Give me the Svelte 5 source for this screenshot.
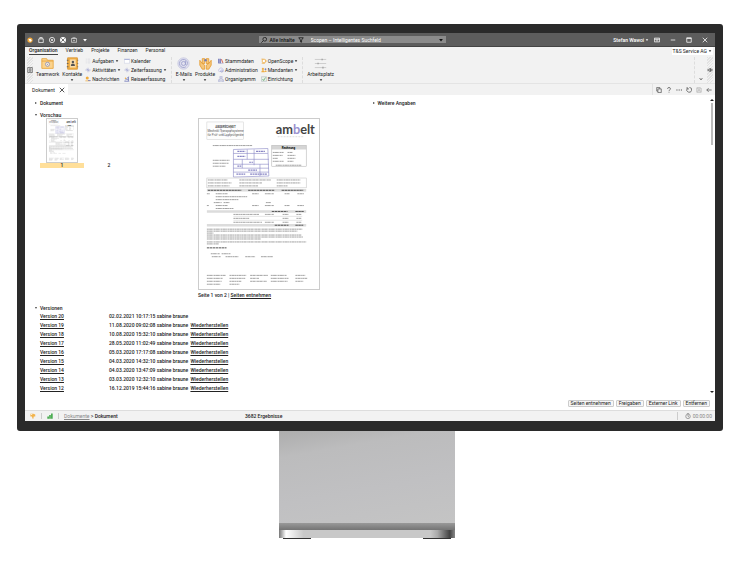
<script lang="ts">
  interface Entry {
    icon: string;
    label: string;
    menu?: boolean;
  }

  const icons: Record<string, string> = {
    logo: '<circle cx="8" cy="8" r="7" fill="#f2a93b"/><path d="M4 5h6l3 4-5 4z" fill="#fff"/>',
    bag: '<path d="M2 5h12v10H2zM5 5V1h6v4" fill="none" stroke="#fff" stroke-width="2"/>',
    play: '<circle cx="8" cy="8" r="7" fill="none" stroke="#fff" stroke-width="2"/><circle cx="8" cy="8" r="2.5" fill="#fff"/>',
    ring: '<circle cx="8" cy="8" r="5.5" fill="none" stroke="#fff" stroke-width="5"/><path d="M3 3l3 3M13 3l-3 3M3 13l3-3M13 13l-3-3" stroke="#666" stroke-width="2"/>',
    camera: '<path d="M1 4h14v10H1zM4 2h8" fill="none" stroke="#ddd" stroke-width="2"/><circle cx="8" cy="9" r="2" fill="#ddd"/>',
    down: '<path d="M3 5h10l-5 7z" fill="currentColor"/>',
    search: '<circle cx="10" cy="6" r="5" fill="none" stroke="currentColor" stroke-width="2"/><path d="M6 10l-5 5" stroke="currentColor" stroke-width="2"/>',
    filter: '<path d="M2 2h12L9.5 8v6l-3-1V8z" fill="none" stroke="currentColor" stroke-width="2"/>',
    ribbon: '<path d="M1 3h14v10H1zM1 6h14M8 12V8M6 9l2-2 2 2" fill="none" stroke="currentColor" stroke-width="2"/>',
    min: '<path d="M2 8h12" stroke="currentColor" stroke-width="2"/>',
    max: '<path d="M2 2h12v12H2zM2 4h12" fill="none" stroke="currentColor" stroke-width="2"/>',
    close: '<path d="M2 2l12 12M14 2L2 14" stroke="currentColor" stroke-width="2"/>',
    folder: '<path d="M1 2h6l1 2h7v10H1z" fill="#fbd38d" stroke="#e8a23a" stroke-width="1"/><path d="M1 5h14" stroke="#e8a23a"/><circle cx="8" cy="9" r="2.5" fill="#fdf0da" stroke="#8a8fb8"/><circle cx="8" cy="9" r="0.8" fill="#8a8fb8"/>',
    contacts: '<path d="M2 1h12v14H2z" fill="#f0b04a" stroke="#d9932b"/><path d="M5 3h7v10H5z" fill="#fbdda8"/><circle cx="8.5" cy="6" r="1.5" fill="#555"/><path d="M6 11c0-4 5-4 5 0z" fill="#555"/><path d="M1 4h2M1 8h2M1 12h2M14 4h1M14 8h1M14 12h1" stroke="#555"/>',
    tasks: '<path d="M2 3h3M2 8h3M2 13h3M7 3h7M7 8h7M7 13h7" stroke="#d3d4de" stroke-width="1.5"/>',
    activity: '<path d="M1 8h14M8 2v12M4 5l8 6" stroke="#9a9fd0" stroke-width="1.5"/>',
    message: '<circle cx="6" cy="5" r="4" fill="#f0ac3c"/><path d="M1 12h10l4 2H1z" fill="#f0ac3c"/><path d="M8 12h7" stroke="#6e76ba" stroke-width="2"/>',
    calendar: '<path d="M1 2h14v12H1z" fill="#fff" stroke="#b3b8d6"/><path d="M1 4h14" stroke="#98a0d0" stroke-width="2"/>',
    trip: '<path d="M1 14h13M3 12L12 2v11M7 9l6 2" fill="none" stroke="#7078b8" stroke-width="2"/><circle cx="4" cy="6" r="2" fill="#f0ac3c"/>',
    at: '<circle cx="8" cy="8" r="7" fill="#e0e0ee" stroke="#c6c8e0"/><circle cx="8" cy="8" r="2.5" fill="none" stroke="#9b9fcd"/><path d="M10.5 5v4c0 2 2.500 1 2.500-1a5 5 0 1 0-2 4" fill="none" stroke="#9b9fcd"/>',
    hands: '<path d="M1 4l3 4 3 2v5H4l-3-5zM15 4l-3 4-3 2v5h3l3-5z" fill="#f5c67c" stroke="#e59b2e"/><path d="M4 2h3v6H4zM9 2h3v6H9z" fill="#f5c67c" stroke="#e59b2e"/><circle cx="8" cy="4" r="1.5" fill="#777cab"/>',
    books: '<path d="M2 2v12M6 2v12" stroke="#686fb5" stroke-width="3"/><path d="M9 3l4 10" stroke="#d87565" stroke-width="3"/><path d="M1 14h14" stroke="#686fb5"/>',
    cloud: '<path d="M4 12a3 3 0 0 1 0-6 4 4 0 0 1 8 0 3 3 0 0 1 0 6z" fill="#eeeefa" stroke="#9da2d0"/><circle cx="10" cy="11" r="3" fill="none" stroke="#7379ba"/>',
    org: '<path d="M5 1h6v4H5zM1 11h5v4H1zM10 11h5v4h-5zM8 5v3M3 11V8h10v3" fill="none" stroke="#a0a5cf" stroke-width="1.5"/>',
    scope: '<circle cx="8" cy="8" r="5" fill="#fff" stroke="#eda83c" stroke-width="2"/><path d="M1 3h5M10 8h5M2 14h8" stroke="#eda83c" stroke-width="2"/>',
    clients: '<circle cx="5" cy="5" r="3" fill="#efae46"/><circle cx="12" cy="6" r="2.5" fill="#7e83b6"/><path d="M1 14c0-7 8-7 9 0zM10 13c0-5 5-5 5 0z" fill="#efae46"/>',
    setup: '<path d="M1 2h14v12H1z" fill="#eaf2ea" stroke="#8b97a5"/><path d="M4 8l3 4 5-8" fill="none" stroke="#5da269" stroke-width="2"/>',
    sliders: '<path d="M1 3h14M1 8h14M1 13h14" stroke="#c5c5c5"/><path d="M10 2v2M5 7v2M11 12v2" stroke="#9c9c9c" stroke-width="1.5"/>',
    copy: '<path d="M5 5h9v10H5zM5 11H2V1h8v4" fill="none" stroke="currentColor" stroke-width="2"/>',
    help: '<path d="M4 5c0-5 8-5 8 0 0 3-4 2-4 6M8 13v2" fill="none" stroke="currentColor" stroke-width="2"/>',
    more: '<path d="M1 8h3M7 8h3M13 8h3" stroke="currentColor" stroke-width="3"/>',
    reload: '<path d="M3 4a6.5 6.5 0 1 0 6-3M3 0v5h5" fill="none" stroke="currentColor" stroke-width="2"/>',
    save: '<path d="M2 2h10l2 2v10H2zM5 2v4h6V2M5 14V9h6v5" fill="none" stroke="#aaa" stroke-width="1.5"/>',
    back: '<path d="M15 8H2M7 3L2 8l5 5" fill="none" stroke="currentColor" stroke-width="2"/>',
    chevron: '<path d="M3 5l5 6 5-6" fill="none" stroke="currentColor" stroke-width="3"/>',
    pin: '<path d="M0 8h5M5 5v6h5V5zM10 8h6M10 3v10" fill="none" stroke="currentColor" stroke-width="2"/>',
    list: '<path d="M2 1h12v14H2zM5 5h6M5 8h6M5 11h6" fill="none" stroke="currentColor" stroke-width="2"/>',
    thumb: '<path d="M1 2h8l5 2v5h-4l-1 6H7L5 9H1z" fill="#f2b44d"/><path d="M2 4h4" stroke="#fff" stroke-width="2"/>',
    signal: '<path d="M3 15V9M8 15V5M13 15V1" stroke="#36a33d" stroke-width="4"/>',
    clock: '<circle cx="8" cy="9" r="6" fill="none" stroke="currentColor" stroke-width="2"/><path d="M8 5v4l3 2M5 1h6" fill="none" stroke="currentColor" stroke-width="2"/>',
  };

  const quickIcons = ['logo', 'bag', 'play', 'ring', 'camera', 'down'];
  const menuTabs = ['Organisation', 'Vertrieb', 'Projekte', 'Finanzen', 'Personal'];

  const taskEntries: Entry[] = [
    { icon: 'tasks', label: 'Aufgaben', menu: true },
    { icon: 'activity', label: 'Aktivitäten', menu: true },
    { icon: 'message', label: 'Nachrichten' },
  ];
  const timeEntries: Entry[] = [
    { icon: 'calendar', label: 'Kalender' },
    { icon: 'activity', label: 'Zeiterfassung', menu: true },
    { icon: 'trip', label: 'Reiseerfassung' },
  ];
  const adminEntries: Entry[] = [
    { icon: 'books', label: 'Stammdaten' },
    { icon: 'cloud', label: 'Administration' },
    { icon: 'org', label: 'Organigramm' },
  ];
  const scopeEntries: Entry[] = [
    { icon: 'scope', label: 'OpenScope', menu: true },
    { icon: 'clients', label: 'Mandanten', menu: true },
    { icon: 'setup', label: 'Einrichtung' },
  ];

  const versions = [
    { nr: 20, date: '02.02.2021 10:17:15' },
    { nr: 19, date: '11.08.2020 09:02:08' },
    { nr: 18, date: '10.08.2020 15:32:10' },
    { nr: 17, date: '28.05.2020 11:02:49' },
    { nr: 16, date: '05.03.2020 17:17:08' },
    { nr: 15, date: '04.03.2020 14:32:10' },
    { nr: 14, date: '04.03.2020 13:47:09' },
    { nr: 13, date: '03.03.2020 12:32:10' },
    { nr: 12, date: '16.12.2019 15:44:16' },
  ];

  const actions = ['Seiten entnehmen', 'Freigaben', 'Externer Link', 'Entfernen'];

  // text lines of the scanned invoice: x, y, length
  const scanLines = [
    [14, 27, 40], [14, 42, 17], [14, 45, 16], [14, 48, 13],
    [75, 34, 11], [90, 34, 5], [75, 37, 10], [90, 37, 8], [75, 40, 5], [90, 40, 8],
    [75, 43, 11], [90, 43, 6], [78, 47, 26],
    [9, 62, 20], [41, 62, 32], [79, 62, 24],
    [9, 65, 24], [41, 65, 23], [79, 65, 24],
    [9, 68, 22], [41, 68, 19], [79, 68, 11],
    [8, 76, 3], [17, 76, 12], [54, 76, 7], [67, 76, 9], [87, 76, 5], [100, 76, 7],
    [17, 79, 32], [17, 82, 23], [15, 85, 8], [25, 85, 6], [68, 85, 5],
    [8, 88, 2], [17, 88, 12], [54, 88, 7], [67, 88, 9], [87, 88, 5], [100, 88, 7],
    [17, 91, 18], [35, 97, 26], [67, 97, 9], [85, 97, 6], [99, 97, 5],
    [35, 101, 16], [85, 101, 6], [99, 101, 5],
    [35, 105, 29], [67, 105, 9], [85, 105, 6], [99, 105, 5],
    [8, 112, 97], [8, 114, 92], [8, 116, 7], [8, 118, 96], [8, 120, 98],
    [8, 122, 55], [8, 125, 101], [8, 127, 12],
    [12, 137, 9], [23, 137, 9], [13, 140, 9], [27, 140, 13], [47, 140, 10], [63, 140, 12],
    [8, 159, 19], [31, 159, 17], [52, 159, 18], [73, 159, 16], [98, 159, 10],
    [8, 162, 16], [31, 162, 16], [52, 162, 9], [73, 162, 18], [98, 162, 12],
    [8, 165, 15], [31, 165, 12], [52, 165, 17], [73, 165, 17], [98, 165, 8],
    [8, 168, 14], [31, 168, 10],
  ];

  let query = $state('');
  let activeTab = $state('Organisation');
</script>

{#snippet icon(name: string, size = 'sm')}
  <svg class="icon {size}" viewBox="0 0 16 16" aria-hidden="true">{@html icons[name]}</svg>
{/snippet}

{#snippet bigEntry(name: string, label: string, menu: boolean)}
  <button class="big-entry">
    {@render icon(name, 'lg')}
    <span>{label}</span>
    {#if menu}{@render icon('down', 'xs')}{/if}
  </button>
{/snippet}

{#snippet entryList(entries: Entry[])}
  <div class="entry-list">
    {#each entries as entry (entry.label)}
      <button class="entry">
        {@render icon(entry.icon)}
        {entry.label}
        {#if entry.menu}{@render icon('down', 'xs')}{/if}
      </button>
    {/each}
  </div>
{/snippet}

{#snippet scan()}
  <svg class="scan" viewBox="0 0 122 173" role="img" aria-label="Rechnung">
    <rect x="8" y="3" width="37" height="18" fill="#fdfdfd" stroke="#ccc" stroke-width="0.5" />
    <path d="M27 6l6 4-3 8-6-2-2-7z" fill="none" stroke="#b5b3df" stroke-width="0.5" />
    <g class="scan-stamp">
      <text class="strong" x="27" y="9" text-anchor="middle">ABGERECHNET</text>
      <text x="27" y="13" text-anchor="middle">Mechnikl Transportsysteme</text>
      <text x="27" y="17" text-anchor="middle">für Prüf- und Lastprüfgeräte</text>
    </g>
    <text class="scan-logo" x="78" y="15">am<tspan fill="#9b91cf">b</tspan>elt</text>
    <path d="M80 18h26" stroke="#bbb" stroke-width="0.5" stroke-dasharray="2 1" />
    <rect x="74" y="27" width="35" height="4" fill="#d5d5d5" />
    <rect x="74" y="27" width="35" height="21" fill="none" stroke="#aaa" stroke-width="0.5" />
    <text class="scan-title" x="91" y="30" text-anchor="middle">Rechnung</text>
    <g fill="none" stroke="#8784c4" stroke-width="0.6">
      <path d="M35 31l35-1 1 28-36 1z" />
      <path d="M35 35h35M35 41h36M35 46h36M35 50h36M35 54h36M49 31v10M56 31v16M44 41v9M62 46v12" />
      <path d="M39 33h8M58 33h9M39 38h8M51 44h4M39 48h4M50 52h9M38 56h9M52 56h17" stroke-width="1.2" stroke-dasharray="2 0.5" />
    </g>
    <rect x="8" y="60" width="101" height="10" fill="none" stroke="#bbb" stroke-width="0.5" />
    <path d="M8 72.5h101M8 94h101M8 108h101" stroke="#dcdcdc" stroke-width="2.5" />
    <path d="M9 72.5h34M50 72.5h27M84 72.5h22M74 94h16M98 94h9M77 108h14M98 108h8M8 131h20" stroke="#555" stroke-width="1" stroke-dasharray="2.5 0.5" />
    <path d="M35 99h70M35 103h70" stroke="#ccc" stroke-width="0.5" />
    <g stroke="#8a8a8a" stroke-width="0.8" stroke-dasharray="2 0.3 3 0.3 1 0.4">
      {#each scanLines as [x, y, length]}
        <path d="M{x} {y}h{length}" />
      {/each}
    </g>
  </svg>
{/snippet}

<main class="page">
  <div class="monitor">
    <header class="titlebar">
      <div class="quick">
        {#each quickIcons as name (name)}
          <button aria-label={name}>{@render icon(name)}</button>
        {/each}
      </div>
      <div class="search">
        <button class="scope">{@render icon('search')} Alle Inhalte {@render icon('filter')}</button>
        <input type="text" aria-label="Suche" placeholder="Scopen – Intelligentes Suchfeld" bind:value={query} />
        {@render icon('down')}
      </div>
      <div class="window-tools">
        <button class="user">Stefan Wawoi {@render icon('down', 'xs')}</button>
        <button aria-label="Menüband">{@render icon('ribbon')}</button>
        <button aria-label="Minimieren">{@render icon('min')}</button>
        <button aria-label="Maximieren">{@render icon('max')}</button>
        <button aria-label="Schließen">{@render icon('close')}</button>
      </div>
    </header>

    <nav class="menu">
      {#each menuTabs as tab (tab)}
        <button class="menu-tab" class:active={tab === activeTab} onclick={() => (activeTab = tab)}>{tab}</button>
      {/each}
      <button class="company">T&amp;S Service AG {@render icon('down', 'xs')}</button>
    </nav>

    <div class="ribbon">
      <div class="handle">{@render icon('list')}</div>
      {@render bigEntry('folder', 'Teamwork', false)}
      {@render bigEntry('contacts', 'Kontakte', true)}
      {@render entryList(taskEntries)}
      {@render entryList(timeEntries)}
      <div class="divider"></div>
      {@render bigEntry('at', 'E-Mails', true)}
      {@render bigEntry('hands', 'Produkte', true)}
      {@render entryList(adminEntries)}
      {@render entryList(scopeEntries)}
      <div class="divider"></div>
      {@render bigEntry('sliders', 'Arbeitsplatz', true)}
      <div class="ribbon-end">
        <button class="expand" aria-label="Mehr">{@render icon('chevron', 'xs')}</button>
        <div class="handle">{@render icon('pin')}</div>
      </div>
    </div>

    <div class="doc-bar">
      <div class="doc-tab">
        Dokument
        <button aria-label="Tab schließen">{@render icon('close')}</button>
      </div>
      <div class="doc-tools">
        {#each ['copy', 'help', 'more', 'reload', 'save', 'back'] as name (name)}
          <button aria-label={name}>{@render icon(name)}</button>
        {/each}
      </div>
    </div>

    <div class="content">
      <div class="columns">
        <div>
          <h2 class="section closed">Dokument</h2>
          <h2 class="section">Vorschau</h2>
          <div class="preview">
            <div class="pages">
              <button class="page-thumb selected">
                <span class="thumb-image">{@render scan()}</span>
                <span class="page-nr">1</span>
              </button>
              <button class="page-thumb">
                <span class="thumb-image"></span>
                <span class="page-nr">2</span>
              </button>
            </div>
            <div class="large">
              {@render scan()}
              <p>Seite 1 von 2 | <a href="#seiten">Seiten entnehmen</a></p>
            </div>
          </div>
          <h2 class="section versions-title">Versionen</h2>
          <ul class="versions">
            {#each versions as version, i (version.nr)}
              <li>
                <a href="#version-{version.nr}">Version {version.nr}</a>
                <span>
                  {version.date} sabine braune
                  {#if i > 0}<a class="restore" href="#restore-{version.nr}">Wiederherstellen</a>{/if}
                </span>
              </li>
            {/each}
          </ul>
        </div>
        <div>
          <h2 class="section closed">Weitere Angaben</h2>
        </div>
      </div>
      <div class="scrollbar">
        <span class="arrow up"></span>
        <span class="scroll-thumb"></span>
        <span class="arrow"></span>
      </div>
    </div>

    <div class="actions">
      {#each actions as action (action)}
        <button>{action}</button>
      {/each}
    </div>

    <footer class="status">
      {@render icon('thumb')}
      <span class="status-line"></span>
      {@render icon('signal')}
      <span class="status-line"></span>
      <span class="crumbs"><a href="#dokumente">Dokumente</a> &gt; <b>Dokument</b></span>
      <span class="results">3682 Ergebnisse</span>
      <span class="timer">{@render icon('clock')} 00:00:00</span>
    </footer>
  </div>

  <div class="stand">
    <div class="stand-neck"></div>
    <div class="stand-band"></div>
    <div class="stand-foot"></div>
    <div class="stand-pads"><span></span><span></span></div>
  </div>
</main>

<style>
  :global(body) {
    background: #fff;
  }

  .page {
    padding: 24px 17px;
    font-family: Roboto, "Liberation Sans", sans-serif;
    font-size: 5px;
    line-height: 8px;
    color: #222;
  }

  button,
  input {
    font: inherit;
    color: inherit;
    background: none;
    border: none;
    padding: 0;
    margin: 0;
  }

  a {
    color: inherit;
  }

  .monitor {
    border: 8px solid #2a2a2a;
    border-top-width: 9px;
    border-bottom-width: 10px;
    border-radius: 3px;
    background: #fff;
  }

  .icon {
    display: block;
    flex: none;
    width: 6px;
    height: 6px;
  }

  .icon.xs {
    width: 4px;
    height: 4px;
  }

  .icon.lg {
    width: 13px;
    height: 13px;
  }

  .titlebar {
    display: grid;
    grid-template-columns: 34% 187px 1fr;
    align-items: center;
    height: 13px;
    padding: 0 7px 0 2px;
    background: #5d5d5d;
    border-bottom: 1px solid #444;
    color: #fff;
  }

  .quick {
    display: flex;
    gap: 5px;
  }

  .search {
    display: flex;
    align-items: center;
    height: 7px;
    padding: 0 2px;
    background: #8b8b8b;
    color: #111;
  }

  .scope {
    display: flex;
    align-items: center;
    gap: 3px;
    font-weight: 500;
  }

  .search input {
    flex: 1;
    min-width: 0;
    height: 7px;
    padding-left: 7px;
    color: #fff;
  }

  .search input::placeholder {
    color: #fff;
    opacity: 1;
  }

  .window-tools {
    display: flex;
    justify-content: flex-end;
    align-items: center;
    gap: 10px;
  }

  .user {
    display: flex;
    align-items: center;
    gap: 1px;
    margin-right: -5px;
    font-weight: 500;
  }

  .menu {
    display: flex;
    gap: 8px;
    padding: 0 2px 0 4px;
    background: #f2f2f2;
  }

  .menu-tab {
    line-height: 7px;
    border-bottom: 1px solid transparent;
  }

  .menu-tab.active {
    border-bottom-color: #444;
    font-weight: 500;
  }

  .company {
    display: flex;
    align-items: center;
    gap: 1px;
    margin-left: auto;
    padding: 0 1px;
    line-height: 7px;
    background: #fff;
  }

  .ribbon {
    display: flex;
    gap: 3px;
    height: 26px;
    padding: 2px 2px 0 2px;
    background: #f2f2f2;
    border-bottom: 1px solid #e4e4e4;
  }

  .handle {
    display: flex;
    align-items: center;
    color: #555;
    background: repeating-linear-gradient(135deg, #e2e2e2 0 1px, #f2f2f2 1px 2px);
  }

  .big-entry {
    display: flex;
    flex-direction: column;
    align-items: center;
  }

  .entry-list {
    display: flex;
    flex-direction: column;
    justify-content: space-between;
  }

  .entry {
    display: flex;
    align-items: center;
    gap: 1px;
  }

  .divider {
    margin: 0 1px;
    border-left: 1px dashed #ddd;
  }

  .ribbon-end {
    display: flex;
    gap: 4px;
    margin-left: auto;
    border-left: 1px dashed #ddd;
    padding-left: 4px;
  }

  .expand {
    align-self: flex-end;
    padding-bottom: 2px;
  }

  .doc-bar {
    display: flex;
    justify-content: space-between;
    background: #f2f2f2;
  }

  .doc-tab {
    display: flex;
    align-items: center;
    gap: 4px;
    height: 11px;
    padding: 0 3px 0 7px;
    background: #fff;
  }

  .doc-tools {
    display: flex;
    align-items: center;
    gap: 4px;
    padding: 0 3px;
    border-left: 1px solid #e2e2e2;
    color: #555;
  }

  .content {
    display: flex;
    padding: 4px 1px 0 10px;
  }

  .columns {
    flex: 1;
    display: grid;
    grid-template-columns: 1fr 1fr;
  }

  .section {
    display: flex;
    align-items: center;
    gap: 3px;
    margin: 0 0 4px;
    font-size: 5px;
    font-weight: 500;
  }

  .section::before {
    content: "";
    border: 1px solid transparent;
    border-top: 2px solid #444;
    border-bottom: 0;
  }

  .section.closed::before {
    border: 1px solid transparent;
    border-left: 2px solid #444;
    border-right: 0;
  }

  .preview {
    display: grid;
    grid-template-columns: 158px 122px;
    margin-top: -5px;
    padding-left: 5px;
  }

  .pages {
    display: flex;
    align-items: flex-start;
    gap: 3px;
  }

  .page-thumb {
    display: flex;
    flex-direction: column;
    align-items: center;
    width: 44px;
  }

  .thumb-image {
    width: 32px;
    height: 45px;
  }

  .page-nr {
    width: 100%;
    line-height: 5px;
    font-weight: 500;
  }

  .page-thumb.selected .page-nr {
    background: #ffdf9a;
  }

  .scan {
    display: block;
    box-sizing: border-box;
    width: 100%;
    border: 1px solid #ccc;
    background: #fff;
  }

  .scan-stamp {
    font-size: 3px;
    fill: #555;
  }

  .scan-stamp .strong {
    font-weight: 700;
  }

  .scan-logo {
    font-size: 13px;
    font-family: Lato, sans-serif;
    font-weight: 700;
    fill: #444;
  }

  .scan-title {
    font-size: 3px;
    font-weight: 700;
  }

  .large p {
    margin: 1px 0 0;
    font-weight: 500;
    white-space: nowrap;
  }

  .versions-title {
    margin: 5px 0 0;
  }

  .versions {
    margin: 0;
    padding: 0 0 0 5px;
    list-style: none;
    line-height: 9px;
    font-weight: 500;
  }

  .versions li {
    display: grid;
    grid-template-columns: 69px 1fr;
  }

  .restore {
    margin-left: 1px;
  }

  .scrollbar {
    display: flex;
    flex-direction: column;
    align-items: center;
    width: 4px;
  }

  .arrow {
    border: 2px solid transparent;
    border-top-color: #222;
    border-bottom: 0;
    margin-top: auto;
  }

  .arrow.up {
    border: 2px solid transparent;
    border-bottom-color: #222;
    border-top: 0;
    margin: 0 0 2px;
  }

  .scroll-thumb {
    width: 2px;
    height: 42px;
    background: #bbb;
  }

  .actions {
    display: flex;
    justify-content: flex-end;
    gap: 2px;
    padding: 7px 5px 3px;
  }

  .actions button {
    padding: 0 2px;
    line-height: 5px;
    border: 1px solid #ccc;
    border-radius: 1px;
    background: #f6f6f6;
  }

  .status {
    display: grid;
    grid-template-columns: 6px 1px 6px 1px 176px 1fr auto;
    align-items: center;
    gap: 5px;
    height: 10px;
    padding: 0 3px 0 5px;
    background: #f2f2f2;
    border-top: 1px solid #ddd;
  }

  .status-line {
    height: 6px;
    background: #ccc;
  }

  .crumbs a {
    color: #888;
  }

  .crumbs b,
  .results {
    font-weight: 500;
  }

  .timer {
    display: flex;
    align-items: center;
    gap: 2px;
    padding-left: 7px;
    border-left: 1px solid #ccc;
    color: #888;
  }

  .stand {
    width: 176px;
    margin: 0 auto;
    padding-right: 6px;
  }

  .stand-neck {
    height: 92px;
    background: linear-gradient(170deg, #adadad 0%, #bcbcbd 22%, #c0c0c2 60%, #c4c4c4 100%);
  }

  .stand-band {
    height: 7px;
    background: linear-gradient(#999, #747474);
  }

  .stand-foot {
    height: 8px;
    background: linear-gradient(90deg, #777 0, #fff 4%, #c8c8c8 14%, #c8c8c8 86%, #aaa 90%, #444 97%, #888 100%);
  }

  .stand-pads {
    display: flex;
    justify-content: space-between;
    padding: 0 4px;
  }

  .stand-pads span {
    width: 28px;
    height: 1px;
    background: #333;
  }
</style>
